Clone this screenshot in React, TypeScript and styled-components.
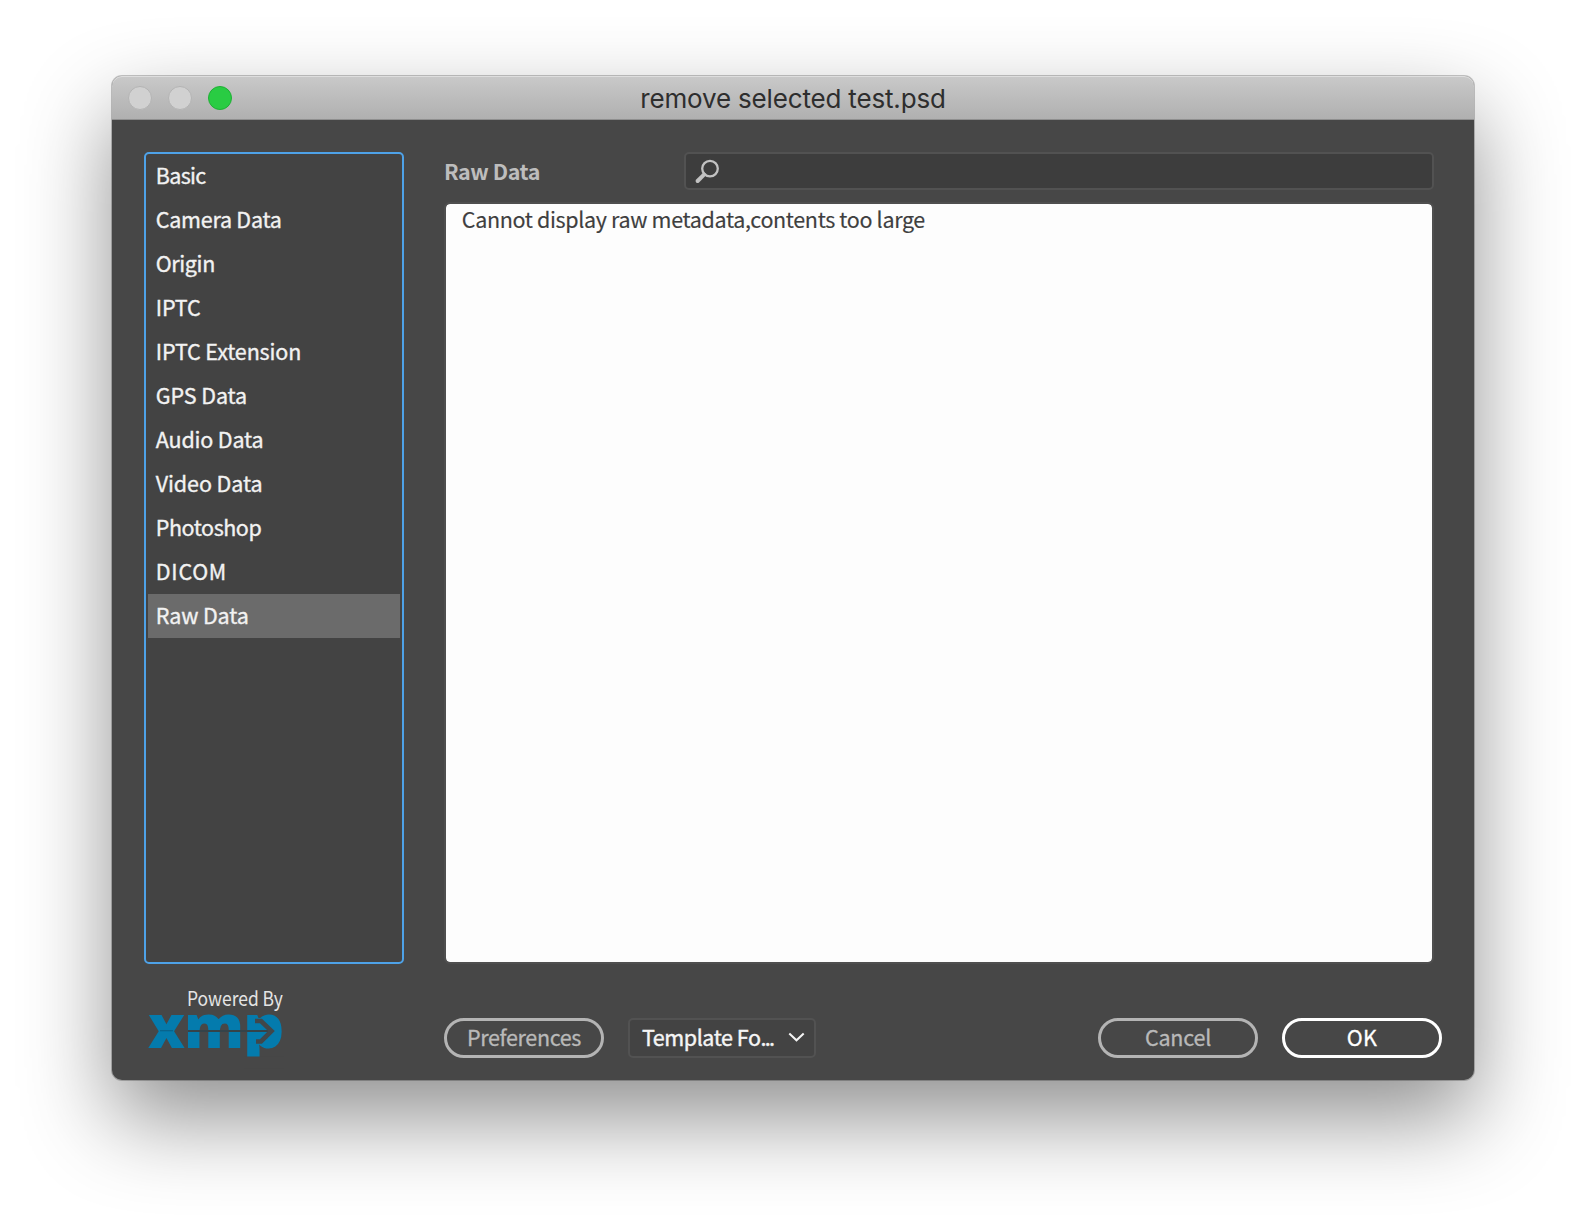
import React, { useState } from "react";
import styled, { createGlobalStyle, css } from "styled-components";

const GlobalStyle = createGlobalStyle`
  *, *::before, *::after { box-sizing: border-box; }
  body {
    margin: 0;
    background: #ffffff;
    font-family: "Noto Sans CJK SC", "Noto Sans", sans-serif;
    font-size: 21.5px;
    -webkit-font-smoothing: antialiased;
  }
`;

const Desktop = styled.div`
  width: 1586px;
  height: 1228px;
  padding: 76px 112px 0;
  overflow: hidden;
`;

const Window = styled.main`
  display: flex;
  flex-direction: column;
  width: 1362px;
  height: 1004px;
  border-radius: 10px;
  background: #474747;
  box-shadow:
    0 0 0 1px rgba(0, 0, 0, 0.22),
    0 38px 88px rgba(0, 0, 0, 0.44);
`;

const TitleBar = styled.header`
  display: grid;
  grid-template-columns: 180px 1fr 180px;
  align-items: center;
  height: 44px;
  flex: none;
  border-radius: 10px 10px 0 0;
  border-bottom: 1px solid #8f8f8f;
  background: linear-gradient(#c9c9c9, #b0b0b0);
  box-shadow: inset 0 1px 0 #dedede;
`;

const Lights = styled.div`
  display: flex;
  gap: 16px;
  padding-left: 16px;
`;

const Light = styled.span<{ $active?: boolean }>`
  width: 24px;
  height: 24px;
  border-radius: 50%;
  background: ${(p) => (p.$active ? "#29cc43" : "#d1d1d1")};
  border: 1px solid ${(p) => (p.$active ? "#1fb035" : "#b4b4b4")};
`;

const Title = styled.h1`
  margin: 0;
  padding-top: 2px;
  text-align: center;
  font: 400 26px/32px Inter, "Liberation Sans", sans-serif;
  letter-spacing: -0.17px;
  color: #2e2e2e;
`;

const Body = styled.div`
  display: grid;
  grid-template-columns: 260px 990px;
  column-gap: 40px;
  padding: 32px 32px 0;
`;

const CategoryList = styled.ul`
  height: 812px;
  margin: 0;
  padding: 0 2px;
  list-style: none;
  border: 2px solid #4ea2e8;
  border-radius: 5px;
  background: #434343;
`;

const Category = styled.li<{ $selected: boolean; $track: number }>`
  height: 44px;
  padding-left: 7.8px;
  line-height: 41px;
  letter-spacing: ${(p) => p.$track}px;
  color: #f2f2f2;
  -webkit-text-stroke: 0.35px #f2f2f2;
  white-space: nowrap;
  cursor: default;
  ${(p) => p.$selected && css`background: #6b6b6b;`}
`;

const Panel = styled.section`
  display: flex;
  flex-direction: column;
  gap: 12px;
  height: 812px;
`;

const PanelHeader = styled.div`
  display: flex;
  height: 38px;
`;

const PanelTitle = styled.h2`
  width: 240px;
  margin: 0;
  font-size: 21.5px;
  font-weight: 700;
  line-height: 37px;
  letter-spacing: -0.45px;
  color: #bdbdbd;
`;

const SearchBox = styled.label`
  display: flex;
  align-items: center;
  flex: 1;
  padding-left: 7px;
  border: 2px solid #525252;
  border-radius: 5px;
  background: #3d3d3d;
`;

const SearchInput = styled.input`
  flex: 1;
  border: 0;
  outline: 0;
  background: transparent;
  color: #f2f2f2;
  font: inherit;
`;

const RawText = styled.div`
  flex: 1;
  padding-left: 15.8px;
  border: 2px solid #4f4f4f;
  border-radius: 6px;
  background: #fdfdfd;
  background-clip: padding-box;
  line-height: 30px;
  letter-spacing: -0.345px;
  color: #3f3f3f;
  -webkit-text-stroke: 0.15px currentColor;
`;

const Footer = styled.footer`
  display: grid;
  grid-template-columns: 272px auto auto 1fr auto auto;
  column-gap: 24px;
  padding: 18px 32px 0 36px;
`;

const Brand = styled.div`
  height: 80px;
`;

const PoweredBy = styled.div`
  width: 120px;
  height: 30px;
  margin-left: 38.7px;
  font-size: 20px;
  line-height: 31px;
  color: #e4e4e4;
  white-space: nowrap;
  transform: scaleX(0.872);
  transform-origin: left;
`;

const Logo = styled.svg`
  display: block;
  overflow: visible;
`;

const PillButton = styled.button<{ $primary?: boolean; $track: number }>`
  display: flex;
  align-items: center;
  justify-content: center;
  width: 160px;
  height: 40px;
  margin-top: 36px;
  padding: 0 0 3px;
  border: 3px solid ${(p) => (p.$primary ? "#ffffff" : "#b4b4b4")};
  border-radius: 20px;
  background: transparent;
  color: ${(p) => (p.$primary ? "#ffffff" : "#b9b9b9")};
  font: inherit;
  letter-spacing: ${(p) => p.$track}px;
  -webkit-text-stroke: 0.3px currentColor;
`;

const TemplateSelect = styled.button`
  display: flex;
  align-items: center;
  justify-content: space-between;
  width: 188px;
  height: 40px;
  margin-top: 36px;
  padding: 0 9px 3px 12px;
  border: 2px solid #525252;
  border-radius: 5px;
  background: #434343;
  color: #f5f5f5;
  font: inherit;
  letter-spacing: -0.45px;
  -webkit-text-stroke: 0.4px currentColor;
`;

const Dots = styled.span`
  letter-spacing: -1.7px;
`;

const categories: [string, number][] = [
  ["Basic", -0.7],
  ["Camera Data", -0.25],
  ["Origin", -0.38],
  ["IPTC", -0.15],
  ["IPTC Extension", -0.12],
  ["GPS Data", -0.1],
  ["Audio Data", -0.18],
  ["Video Data", -0.1],
  ["Photoshop", -0.45],
  ["DICOM", 0.75],
  ["Raw Data", -0.15],
];

const SearchIcon = () => (
  <svg width="28" height="28" viewBox="0 0 28 28" fill="none" stroke="#c2c2c2" strokeLinecap="round">
    <circle cx="17" cy="11.6" r="7.8" strokeWidth="2.3" />
    <path d="M11 17.6 4.6 24" strokeWidth="4" />
  </svg>
);

const ChevronIcon = () => (
  <svg width="17" height="12" viewBox="0 0 17 12" fill="none" stroke="#f5f5f5" strokeWidth="2">
    <path d="M1.3 2.5 8.5 9.3 15.7 2.5" />
  </svg>
);

const XmpLogo = () => (
  <Logo width="140" height="50" viewBox="0 0 140 50" role="img" aria-label="xmp">
    <g fill="#047bad" fontFamily="Open Sans, Noto Sans, sans-serif" fontWeight="800" fontSize="58">
      <text transform="translate(0 35.8) scale(1.01 1.04)">x</text>
      <text transform="translate(36 35.8) scale(1.035 1.04)">m</text>
      <text transform="translate(95 35.8) scale(1.11 1.04)">p</text>
    </g>
    <path d="M100 6h13l11 12.5-11 12h-13z" fill="#047bad" />
    <path d="M12 18.7h13" stroke="#0a6389" strokeWidth="1.2" />
    <path d="M40 19h80" stroke="#354349" strokeWidth="2.1" />
    <path d="M107 9h6l10.5 10L113 29.5h-5" fill="none" stroke="#41474a" strokeWidth="4.6" />
    <path d="M96 44.5h40v12h-40z" fill="#474747" />
  </Logo>
);

export default function App() {
  const [selected, setSelected] = useState("Raw Data");
  return (
    <>
      <GlobalStyle />
      <Desktop>
        <Window>
          <TitleBar>
            <Lights>
              <Light />
              <Light />
              <Light $active />
            </Lights>
            <Title>remove selected test.psd</Title>
          </TitleBar>
          <Body>
            <CategoryList>
              {categories.map(([name, track]) => (
                <Category key={name} $track={track} $selected={name === selected} onClick={() => setSelected(name)}>
                  {name}
                </Category>
              ))}
            </CategoryList>
            <Panel>
              <PanelHeader>
                <PanelTitle>Raw Data</PanelTitle>
                <SearchBox>
                  <SearchIcon />
                  <SearchInput aria-label="Search" />
                </SearchBox>
              </PanelHeader>
              <RawText>Cannot display raw metadata,contents too large</RawText>
            </Panel>
          </Body>
          <Footer>
            <Brand>
              <PoweredBy>Powered By</PoweredBy>
              <XmpLogo />
            </Brand>
            <PillButton $track={-0.33}>Preferences</PillButton>
            <TemplateSelect>
              <span>
                Template Fo<Dots>...</Dots>
              </span>
              <ChevronIcon />
            </TemplateSelect>
            <span />
            <PillButton $track={-0.2}>Cancel</PillButton>
            <PillButton $primary $track={0.4}>OK</PillButton>
          </Footer>
        </Window>
      </Desktop>
    </>
  );
}
